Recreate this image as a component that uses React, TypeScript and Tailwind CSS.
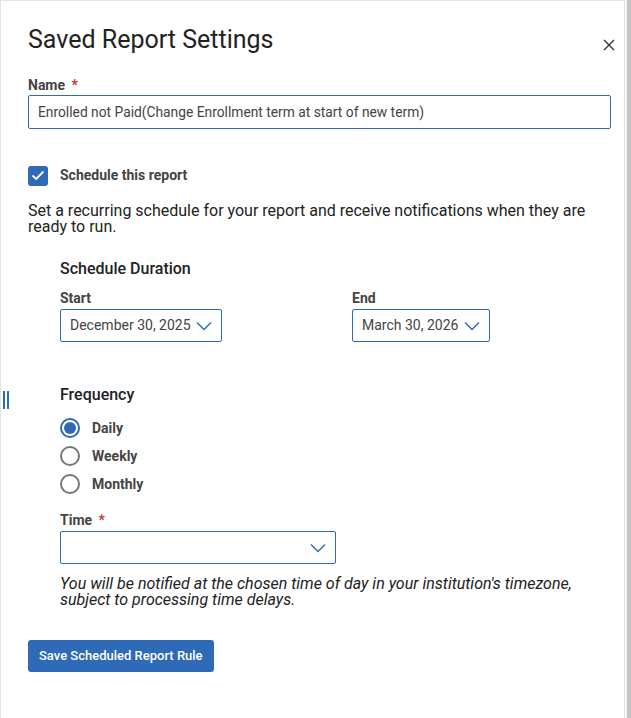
import { useState } from "react"

const blue = "#2e6ab6"

const Chevron = () => (
  <svg width="16" height="10" viewBox="0 0 16 10" fill="none">
    <path d="M1 1.5 8 8.5 15 1.5" stroke={blue} strokeWidth="1.4" />
  </svg>
)

const Select = (props: { value?: string; className: string }) => (
  <div
    className={`flex h-[33px] items-center justify-between rounded-[2px] border border-[#2e6ab6] pl-[9px] pr-[9px] text-[14px] text-[#444] ${props.className}`}
  >
    <span>{props.value}</span>
    <Chevron />
  </div>
)

const Radio = (props: { label: string; checked: boolean; onClick: () => void }) => (
  <button onClick={props.onClick} className="flex h-[28px] items-center gap-[12px] text-left">
    <span
      className={`flex h-[20px] w-[20px] items-center justify-center rounded-full border-2 ${
        props.checked ? "border-[#2e6ab6]" : "border-[#777]"
      }`}
    >
      {props.checked && <span className="h-[12px] w-[12px] rounded-full bg-[#2e6ab6]" />}
    </span>
    <span className="text-[14px] font-bold text-[#444]">{props.label}</span>
  </button>
)

export default function App() {
  const [freq, setFreq] = useState("Daily")
  const [scheduled, setScheduled] = useState(true)

  return (
    <div className="relative h-[718px] w-[631px] overflow-hidden bg-white font-['Roboto',sans-serif] text-[#222]">
      <div className="flex h-full">
        <div className="relative flex-1 border-l border-t border-[#e4e4e4]">
          <div className="absolute left-[2px] top-[390px] flex gap-[2px]">
            <span className="h-[18px] w-[2px] bg-[#2e6ab6]" />
            <span className="h-[18px] w-[2px] bg-[#2e6ab6]" />
          </div>

          <div className="pl-[27px] pr-[13px] pt-[22px]">
            <div className="flex items-start justify-between">
              <h1 className="text-[25px] font-normal leading-[34px] text-[#222]">Saved Report Settings</h1>
              <button className="-mr-[4px] mt-[16px] text-[#333]">
                <svg width="12" height="12" viewBox="0 0 12 12">
                  <path d="M1 1 11 11M11 1 1 11" stroke="#333" strokeWidth="1.4" />
                </svg>
              </button>
            </div>

            <div className="mt-[20px] text-[14px] font-bold leading-[16px] text-[#444]">
              Name <span className="ml-[3px] text-[#c0392b]">*</span>
            </div>
            <div className="mt-[2px] flex h-[34px] items-center rounded-[2px] border border-[#2e6ab6] px-[9px] text-[13.8px] text-[#444]">
              Enrolled not Paid(Change Enrollment term at start of new term)
            </div>

            <button onClick={() => setScheduled(!scheduled)} className="mt-[36px] flex items-center gap-[12px]">
              <span className="flex h-[20px] w-[20px] items-center justify-center rounded-[3px] bg-[#2e6ab6]">
                {scheduled && (
                  <svg width="14" height="11" viewBox="0 0 14 11" fill="none">
                    <path d="M1.5 5.5 5.2 9 12.5 1.5" stroke="white" strokeWidth="1.8" />
                  </svg>
                )}
              </span>
              <span className="text-[14px] font-bold text-[#444]">Schedule this report</span>
            </button>

            <p className="mt-[17px] pr-[24px] text-[16px] leading-[16px] text-[#222]">
              Set a recurring schedule for your report and receive notifications when they are ready to run.
            </p>

            <div className="pl-[32px]">
              <h2 className="mt-[24px] text-[16px] font-medium leading-[20px] text-[#222]">Schedule Duration</h2>

              <div className="mt-[11px] flex gap-[130px]">
                <div>
                  <div className="text-[14px] font-bold leading-[16px] text-[#444]">Start</div>
                  <Select value="December 30, 2025" className="mt-[3px] w-[162px]" />
                </div>
                <div>
                  <div className="text-[14px] font-bold leading-[16px] text-[#444]">End</div>
                  <Select value="March 30, 2026" className="mt-[3px] w-[138px]" />
                </div>
              </div>

              <h2 className="mt-[43px] text-[16px] font-medium leading-[20px] text-[#222]">Frequency</h2>

              <div className="mt-[9px] flex flex-col">
                {["Daily", "Weekly", "Monthly"].map((f) => (
                  <Radio key={f} label={f} checked={freq === f} onClick={() => setFreq(f)} />
                ))}
              </div>

              <div className="mt-[14px] text-[14px] font-bold leading-[16px] text-[#444]">
                Time <span className="ml-[3px] text-[#c0392b]">*</span>
              </div>
              <Select className="mt-[3px] w-[276px]" />

              <p className="mt-[12px] pr-[20px] text-[16px] italic leading-[16px] text-[#222]">
                You will be notified at the chosen time of day in your institution's timezone, subject to processing time delays.
              </p>
            </div>

            <button className="mt-[32px] h-[32px] rounded-[3px] bg-[#2e6ab6] px-[11px] text-[13px] font-medium text-white">
              Save Scheduled Report Rule
            </button>
          </div>
        </div>
        <div className="w-[1px] bg-[#e0e0e0]" />
        <div className="w-[2px] bg-[#f7f7f7]" />
        <div className="w-[4px] bg-[#c4c4c4]" />
      </div>
    </div>
  )
}
